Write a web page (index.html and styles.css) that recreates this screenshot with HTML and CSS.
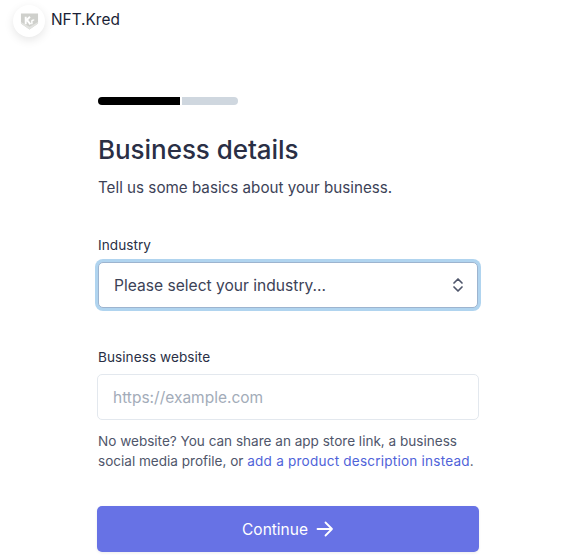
FILE: index.html
```html
<!DOCTYPE html>
<html lang="en">
<head>
<meta charset="utf-8">
<title>NFT.Kred</title>
<link rel="stylesheet" href="styles.css">
</head>
<body>
<header class="brand">
  <span class="logo">
    <svg width="20" height="20" viewBox="0 0 20 20">
      <path d="M1 1.5H19V12L10 18.5 1 12Z" fill="#cfd0cc"/>
      <path d="M1 10.5 10 15.5 19 10.5V12L10 18.5 1 12Z" fill="#e2e3e0"/>
      <path d="M6 5V13M6 9.5 10.5 5M7.5 8.5 11 13" stroke="#fff" stroke-width="2" fill="none"/>
      <path d="M12.5 13V9.5Q12.5 8.3 15 8.3" stroke="#fff" stroke-width="1.5" fill="none"/>
    </svg>
  </span>
  <span class="brand-name">NFT.Kred</span>
</header>
<main class="form">
  <div class="progress"><span class="progress-done"></span><span class="progress-rest"></span></div>
  <h1>Business details</h1>
  <p class="lead">Tell us some basics about your business.</p>
  <div class="field">
    <label class="label">Industry</label>
    <div class="select">
      <span class="select-text">Please select your industry...</span>
      <svg width="20" height="20" viewBox="0 0 20 20" fill="none" stroke="#4f566b" stroke-width="1.7" stroke-linecap="round" stroke-linejoin="round"><path d="M6 8 10 4 14 8M6 12 10 16 14 12"/></svg>
    </div>
  </div>
  <div class="field field-site">
    <label class="label">Business website</label>
    <div class="input">https://example.com</div>
    <p class="hint">No website? You can share an app store link, a business social media profile, or <a href="#">add a product description instead</a>.</p>
  </div>
  <button class="continue" type="button">Continue
    <svg width="18" height="18" viewBox="0 0 18 18" fill="none" stroke="#fff" stroke-width="1.8" stroke-linecap="round" stroke-linejoin="round"><path d="M1.5 9H16M9.5 2.5 16 9 9.5 15.5"/></svg>
  </button>
</main>
</body>
</html>
```

FILE: styles.css
```css
* { box-sizing: border-box; }
html, body { margin: 0; padding: 0; }
body {
  background: #fff;
  font-family: Inter, "Liberation Sans", sans-serif;
  color: #2a2f45;
  height: 559px;
  overflow: hidden;
}
.brand { display: flex; align-items: flex-start; height: 97px; padding-left: 13px; }
.logo {
  width: 32px; height: 32px; margin-top: 5px; border-radius: 50%;
  background: #fff; box-shadow: 0 3px 10px rgba(0,0,0,.10);
  display: flex; align-items: center; justify-content: center;
}
.logo svg { width: 19px; height: 19px; }
.brand-name { margin: 11px 0 0 6px; font-size: 15.4px; line-height: 18px; color: #1a1f36; }
.form { margin-left: 97px; width: 382px; }
.progress { display: flex; gap: 2px; height: 8px; width: 140px; margin-left: 1px; }
.progress-done { width: 82px; background: #000; border-radius: 4px 0 0 4px; }
.progress-rest { flex: 1; background: #cfd7df; border-radius: 0 4px 4px 0; }
h1 { margin: 25px 0 0 1px; font-size: 26px; line-height: 40px; font-weight: 500; letter-spacing: -0.05px; color: #2a2f45; }
.lead { margin: 6px 0 0 1px; font-size: 15.2px; line-height: 24px; color: #3c4257; }
.field { margin-top: 35px; }
.label { display: block; margin-left: 1px; font-size: 13.6px; line-height: 20px; font-weight: 400; letter-spacing: 0.05px; color: #2a2f45; }
.select {
  margin: 7px 1px 0; height: 46px; padding: 0 9px 0 15px;
  display: flex; align-items: center; justify-content: space-between;
  background: #fff; border-radius: 5px; font-size: 15.6px; color: #3c4257;
  border: 1px solid #9db4cf; box-shadow: 0 0 0 3px #b0d4ef;
}
.field-site { margin-top: 39px; }
.input {
  margin-top: 7px; height: 46px; padding: 0 15px;
  display: flex; align-items: center;
  border: 1px solid #e3e8ee; border-radius: 5px;
  font-size: 15.5px; color: #a3acb9; background: #fff;
}
.hint { margin: 11px 0 0 1px; font-size: 13.55px; line-height: 20px; color: #4f566b; }
.hint a { color: #4f63d9; text-decoration: none; letter-spacing: 0.22px; }
.continue {
  margin-top: 35px; width: 100%; height: 46px; border: 0; border-radius: 5px;
  background: #6772e5; color: #fff; font: inherit; font-size: 15.5px; font-weight: 400;
  display: flex; align-items: center; justify-content: center; gap: 8px;
  box-shadow: 0 1px 3px rgba(0,0,0,.08);
}
```
